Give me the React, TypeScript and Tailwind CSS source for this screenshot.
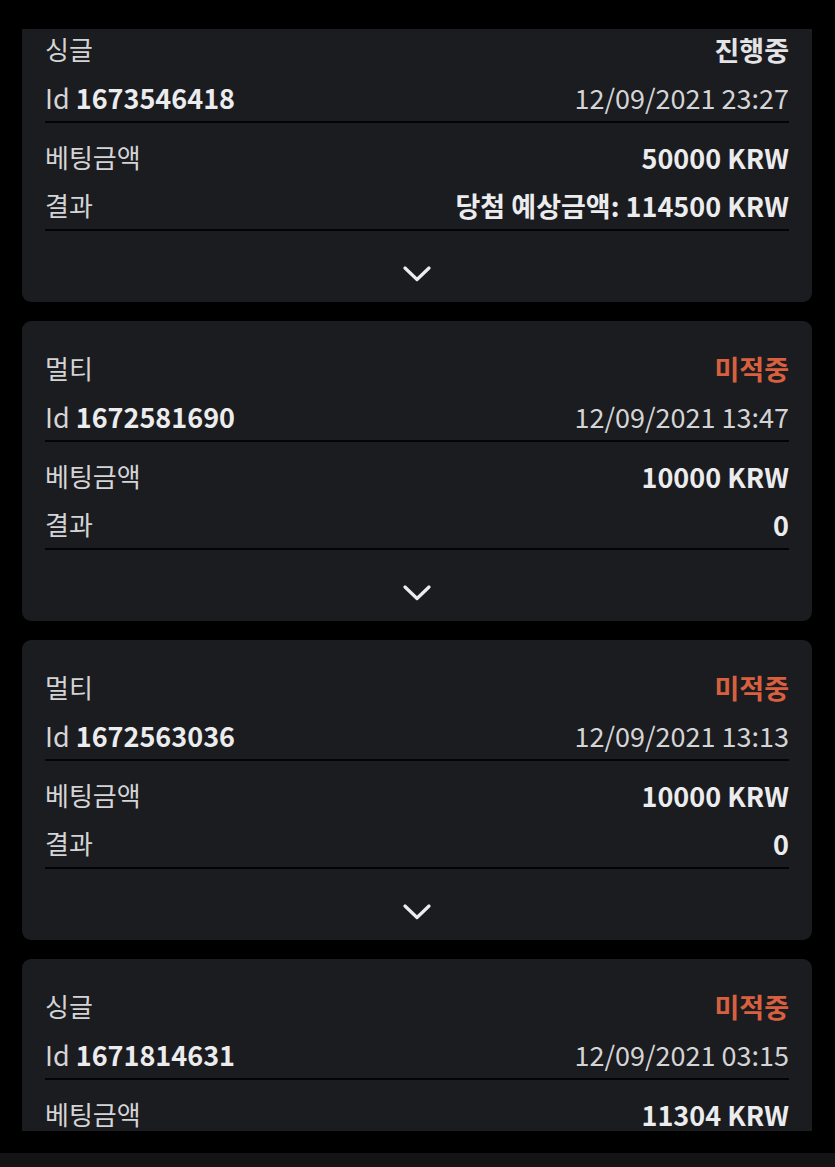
import React from 'react';

type Bet = {
  type: string;
  status: string;
  lost: boolean;
  id: string;
  date: string;
  amount: string;
  result: string;
};

const BETS: Bet[] = [
  { type: '싱글', status: '진행중', lost: false, id: '1673546418', date: '12/09/2021 23:27', amount: '50000 KRW', result: '당첨 예상금액: 114500 KRW' },
  { type: '멀티', status: '미적중', lost: true, id: '1672581690', date: '12/09/2021 13:47', amount: '10000 KRW', result: '0' },
  { type: '멀티', status: '미적중', lost: true, id: '1672563036', date: '12/09/2021 13:13', amount: '10000 KRW', result: '0' },
  { type: '싱글', status: '미적중', lost: true, id: '1671814631', date: '12/09/2021 03:15', amount: '11304 KRW', result: '0' },
];

function Chevron() {
  return (
    <svg width="28" height="16" viewBox="0 0 28 16" fill="none">
      <polyline points="2,2 14,13.5 26,2" stroke="#ececec" strokeWidth="3.2" strokeLinecap="round" strokeLinejoin="round" />
    </svg>
  );
}

function BetCard({ bet }: { bet: Bet }) {
  return (
    <div className="bg-[#1b1c20] rounded-[9px] h-[300px] shrink-0 px-[23px] pt-[23px] flex flex-col">
      {/* header */}
      <div className="h-[48px] flex items-center justify-between">
        <span className="text-[#d4d4d6]">{bet.type}</span>
        <span className={bet.lost ? 'text-[27px] font-bold text-[#d9603f]' : 'text-[27px] font-bold text-[#e4e4e6]'}>
          {bet.status}
        </span>
      </div>
      <div className="h-[48px] flex items-center justify-between text-[27px]">
        <span className="text-[#d4d4d6]">
          Id <span className="font-bold text-[#ececee]">{bet.id}</span>
        </span>
        <span className="text-[#d4d4d6]">{bet.date}</span>
      </div>
      <div className="h-[2px] bg-[#040404]" />

      {/* amounts */}
      <div className="pt-[10px]">
        <div className="h-[48px] flex items-center justify-between">
          <span className="text-[#d4d4d6]">베팅금액</span>
          <span className="text-[27px] font-bold text-[#ececee]">{bet.amount}</span>
        </div>
        <div className="h-[48px] flex items-center justify-between">
          <span className="text-[#d4d4d6]">결과</span>
          <span className="text-[27px] font-bold text-[#ececee]">{bet.result}</span>
        </div>
      </div>
      <div className="h-[2px] bg-[#040404]" />

      <div className="flex justify-center pt-[35px]">
        <Chevron />
      </div>
    </div>
  );
}

export default function App() {
  return (
    <div
      className="bg-black h-[1167px] flex flex-col text-[26px] leading-none"
      style={{ fontFamily: '"Noto Sans CJK KR", "Noto Sans", sans-serif' }}
    >
      <div className="h-[29px] shrink-0" />
      {/* list is scrolled a little, first card's top is hidden */}
      <div className="h-[1102px] shrink-0 overflow-hidden pl-[22px] pr-[23px]">
        <div className="-mt-[27px] flex flex-col gap-[19px]">
          {BETS.map((b) => (
            <BetCard key={b.id} bet={b} />
          ))}
        </div>
      </div>
      <div className="flex-1" />
      <div className="h-[14px] bg-[#141414] shrink-0" />
    </div>
  );
}
